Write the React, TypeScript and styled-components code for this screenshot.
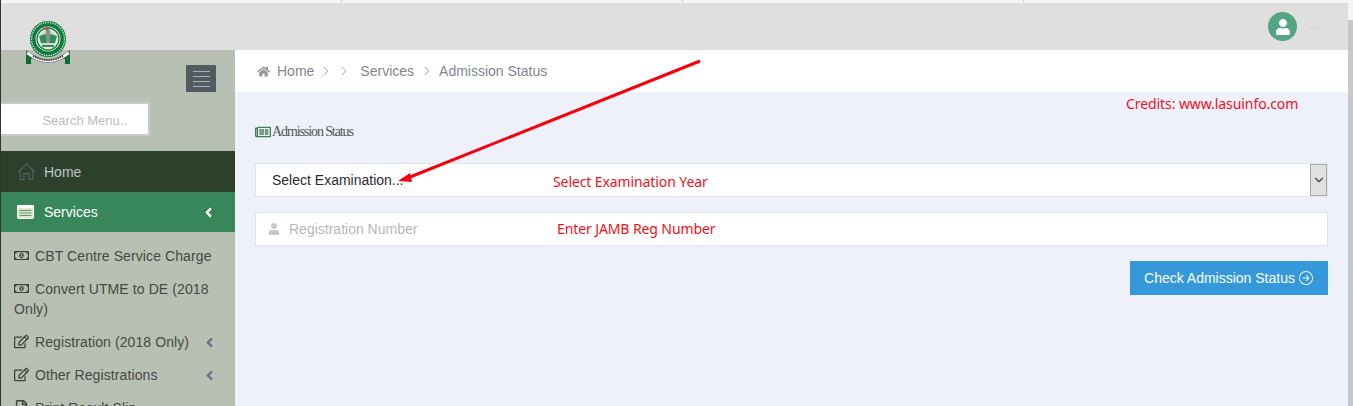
import styled, { createGlobalStyle } from "styled-components";
import {
  FaAngleLeft,
  FaHome,
  FaRegEdit,
  FaRegFileAlt,
  FaRegMoneyBillAlt,
  FaRegNewspaper,
  FaUser,
} from "react-icons/fa";
import { FiChevronDown } from "react-icons/fi";
import { SlArrowRight, SlHome } from "react-icons/sl";
import { BsArrowRightCircle } from "react-icons/bs";

const GlobalStyle = createGlobalStyle`
  html, body {
    margin: 0;
    padding: 0;
    overflow: hidden;
  }
  * {
    box-sizing: border-box;
  }
  body {
    font-family: "Liberation Sans", Arial, sans-serif;
    font-size: 14px;
  }
`;

const subItems = [
  { icon: <FaRegMoneyBillAlt />, label: "CBT Centre Service Charge" },
  { icon: <FaRegMoneyBillAlt />, label: "Convert UTME to DE (2018 Only)" },
  { icon: <FaRegEdit />, label: "Registration (2018 Only)", more: true },
  { icon: <FaRegEdit />, label: "Other Registrations", more: true },
  { icon: <FaRegFileAlt />, label: "Print Result Slip" },
];

const Logo = () => (
  <LogoBox viewBox="0 0 46 44" aria-hidden="true">
    <path d="M1 29 L5 33 L14 37 L6 38 L6 43 L1 43 Z" fill="#0d6b35" />
    <path d="M45 29 L41 33 L32 37 L40 38 L40 43 L45 43 Z" fill="#0d6b35" />
    <path d="M3 30 Q23 48 43 30 L45 33 Q23 50 1 33 Z" fill="#fff" stroke="#555" strokeWidth="0.6" />
    <path d="M8 35 Q23 43 38 35" fill="none" stroke="#333" strokeWidth="1.6" strokeDasharray="1.5 .8" />
    <circle cx="23" cy="18" r="18" fill="#0f7a3c" />
    <circle cx="23" cy="18" r="16.5" fill="none" stroke="#cfe3d4" strokeWidth="1.4" strokeDasharray="1.4 1" />
    <circle cx="23" cy="18" r="12.5" fill="#e9efe9" />
    <circle cx="23" cy="18" r="11" fill="none" stroke="#16803f" strokeWidth="1.3" />
    <circle cx="23" cy="18" r="8.5" fill="#ccd6cf" />
    <path d="M20 9 L22 5 L24 9 Z" fill="#e0392f" />
    <path d="M21 9 H25 L25 22 H21 Z" fill="#7d9a86" />
    <path d="M14 15 L21 13 L21 22 L16 22 Z M32 15 L25 13 L25 22 L30 22 Z" fill="#2f8d55" />
    <path d="M17 25 H29" stroke="#0f7a3c" strokeWidth="1.6" />
  </LogoBox>
);

const ServicesIcon = () => (
  <svg width="17" height="14" viewBox="0 0 17 14" aria-hidden="true">
    <rect x="0.5" y="0.5" width="16" height="13" rx="1" fill="#dfe8cf" stroke="#fff" />
    <rect x="0" y="0" width="17" height="3" rx="1" fill="#fff" />
    <path d="M2.5 5.5 H14.5 M2.5 8 H14.5 M2.5 10.5 H14.5" stroke="#5f9a6f" strokeWidth="1" />
  </svg>
);

const App = () => (
  <Page>
    <GlobalStyle />
    <TopStrip>
      <Tick />
      <Tick />
      <Tick />
    </TopStrip>
    <Header>
      <Avatar>
        <FaUser />
      </Avatar>
      <HeaderCaret>
        <FiChevronDown />
      </HeaderCaret>
    </Header>
    <Logo />
    <Body>
      <Sidebar>
        <ToggleRow>
          <Toggle aria-label="Toggle menu">
            <span />
            <span />
            <span />
            <span />
          </Toggle>
        </ToggleRow>
        <SearchBox placeholder="Search Menu.." />
        <HomeLink>
          <SlHome />
          Home
        </HomeLink>
        <ServicesLink>
          <ServicesIcon />
          <span>Services</span>
          <FaAngleLeft />
        </ServicesLink>
        <SubList>
          {subItems.map(({ icon, label, more }) => (
            <SubItem key={label}>
              <SubText>
                {icon}
                {label}
              </SubText>
              {more && (
                <SubCaret>
                  <FaAngleLeft />
                </SubCaret>
              )}
            </SubItem>
          ))}
        </SubList>
      </Sidebar>
      <Main>
        <Breadcrumb>
          <FaHome />
          <Crumb>Home</Crumb>
          <Sep $left={8} $right={10}>
            <SlArrowRight />
          </Sep>
          <Sep $left={0} $right={12}>
            <SlArrowRight />
          </Sep>
          <Crumb>Services</Crumb>
          <Sep $left={9} $right={8}>
            <SlArrowRight />
          </Sep>
          <Crumb>Admission Status</Crumb>
        </Breadcrumb>
        <Content>
          <Credits>Credits: www.lasuinfo.com</Credits>
          <Title>
            <FaRegNewspaper />
            Admission Status
          </Title>
          <Field>
            <SelectText>Select Examination...</SelectText>
            <Note $left={297} $top={8}>
              Select Examination Year
            </Note>
            <SelectArrow>
              <FiChevronDown />
            </SelectArrow>
          </Field>
          <Field>
            <FieldIcon>
              <FaUser />
            </FieldIcon>
            <RegInput placeholder="Registration Number" />
            <Note $left={301} $top={6}>
              Enter JAMB Reg Number
            </Note>
          </Field>
          <Actions>
            <CheckButton>
              Check Admission Status
              <BsArrowRightCircle />
            </CheckButton>
          </Actions>
        </Content>
      </Main>
    </Body>
    <ScrollTrack>
      <ScrollThumb />
    </ScrollTrack>
    <Arrow viewBox="0 0 330 130" aria-hidden="true">
      <path d="M315 2 L25 118" stroke="#f5000f" strokeWidth="3" fill="none" />
      <path d="M13 122 L25 114 L27 123 Z" fill="#f5000f" />
    </Arrow>
  </Page>
);

export default App;

const Page = styled.div`
  position: relative;
  width: 1353px;
  height: 406px;
  overflow: hidden;
  display: flex;
  flex-direction: column;
  background: #eef1f9;
  border-left: 1px solid #333;
`;

const TopStrip = styled.div`
  height: 3px;
  flex-shrink: 0;
  background: #f6f6f6;
  display: flex;
  justify-content: space-between;
  padding: 0 329px 0 340px;
`;

const Tick = styled.i`
  width: 1px;
  height: 3px;
  background: #d8d8d8;
`;

const Header = styled.header`
  height: 47px;
  flex-shrink: 0;
  background: #dfdfdf;
  display: flex;
  align-items: center;
  justify-content: flex-end;
  padding: 0 32px 0 0;
`;

const Avatar = styled.div`
  width: 29px;
  height: 29px;
  border-radius: 50%;
  background: #53a584;
  color: #fff;
  display: flex;
  align-items: center;
  justify-content: center;
  font-size: 16px;
`;

const HeaderCaret = styled.div`
  margin-left: 10px;
  margin-top: 2px;
  color: #cfd4e0;
  font-size: 14px;
  display: flex;
`;

const LogoBox = styled.svg`
  position: absolute;
  left: 24px;
  top: 21px;
  width: 46px;
  height: 44px;
`;

const Body = styled.div`
  flex: 1;
  display: flex;
  min-height: 0;
`;

const Sidebar = styled.aside`
  width: 234px;
  flex-shrink: 0;
  background: #b8c0b3;
  display: flex;
  flex-direction: column;
  overflow: hidden;

  > * {
    flex-shrink: 0;
  }
`;

const ToggleRow = styled.div`
  display: flex;
  justify-content: flex-end;
  padding: 15px 19px 0 0;
`;

const Toggle = styled.button`
  width: 30px;
  height: 27px;
  padding: 0;
  border: 0;
  background: #515c62;
  display: flex;
  flex-direction: column;
  align-items: center;
  justify-content: center;
  gap: 4px;

  span {
    display: block;
    width: 17px;
    height: 1px;
    background: #a9b0b3;
  }
`;

const SearchBox = styled.input`
  width: 149px;
  height: 34px;
  margin-top: 10px;
  border: 2px solid #c9cbc9;
  border-left: 0;
  background: #fff;
  padding: 2px 21px 0 0;
  text-align: right;
  font: 13px "Liberation Sans", Arial, sans-serif;
  outline: none;

  &::placeholder {
    color: #b9bcc4;
    opacity: 1;
  }
`;

const HomeLink = styled.div`
  height: 41px;
  margin-top: 15px;
  background: #2c402c;
  color: #bcc5cc;
  display: flex;
  align-items: center;
  padding-left: 17px;
  gap: 9px;

  svg {
    font-size: 17px;
    color: #58646c;
  }
`;

const ServicesLink = styled.div`
  height: 40px;
  background: #38875a;
  color: #fff;
  display: flex;
  align-items: center;
  padding: 0 19px 0 16px;
  gap: 10px;

  span {
    flex: 1;
  }

  svg:last-child {
    font-size: 15px;
  }
`;

const SubList = styled.ul`
  list-style: none;
  margin: 0;
  padding: 14px 0 0;
  display: flex;
  flex-direction: column;
  gap: 13px;
`;

const SubItem = styled.li`
  display: flex;
  align-items: center;
  justify-content: space-between;
  padding: 0 18px 0 13px;
  color: #424a42;
  line-height: 20px;
  letter-spacing: 0.1px;
`;

const SubText = styled.span`
  svg {
    font-size: 15px;
    margin-right: 6px;
    vertical-align: -2px;
    color: #3d4338;
  }
`;

const SubCaret = styled.span`
  display: flex;
  color: #66737e;
  font-size: 15px;
`;

const Main = styled.main`
  flex: 1;
  min-width: 0;
  display: flex;
  flex-direction: column;
`;

const Breadcrumb = styled.nav`
  height: 42px;
  flex-shrink: 0;
  background: #fff;
  color: #888;
  display: flex;
  align-items: center;
  padding-left: 22px;

  > svg {
    font-size: 13px;
    margin-right: 7px;
    color: #999;
  }
`;

const Crumb = styled.span`
  color: #7f8790;
`;

const Sep = styled.span<{ $left: number; $right: number }>`
  display: flex;
  margin: 0 ${(p) => p.$right}px 0 ${(p) => p.$left}px;
  font-size: 8px;
  color: #888;
`;

const Content = styled.section`
  position: relative;
  flex: 1;
  padding: 31px 25px 0 20px;
`;

const Credits = styled.div`
  position: absolute;
  top: 2px;
  left: 891px;
  color: #f0101c;
  font: 14px "Noto Sans", sans-serif;
  letter-spacing: -0.08px;
`;

const Title = styled.h1`
  margin: 0 0 23px;
  height: 17px;
  display: flex;
  align-items: center;
  font: 400 14px "Liberation Serif", serif;
  letter-spacing: -1.1px;
  color: #555;

  svg {
    font-size: 16px;
    color: #3f7f55;
    margin-right: 1px;
  }
`;

const Field = styled.div`
  position: relative;
  height: 34px;
  margin-bottom: 15px;
  background: #fff;
  border: 1px solid #e2e4e8;
  display: flex;
  align-items: center;
`;

const SelectText = styled.span`
  flex: 1;
  padding-left: 16px;
  color: #2b2b2b;
`;

const SelectArrow = styled.span`
  width: 17px;
  align-self: stretch;
  background: #e0e0e0;
  border: 1px solid #a9a9a9;
  color: #444;
  display: flex;
  align-items: center;
  justify-content: center;
  font-size: 14px;
`;

const FieldIcon = styled.span`
  display: flex;
  margin-left: 12px;
  color: #c8c8c8;
  font-size: 12px;
`;

const RegInput = styled.input`
  flex: 1;
  border: 0;
  outline: none;
  background: transparent;
  margin-left: 9px;
  padding: 0;
  font: 14px "Liberation Sans", Arial, sans-serif;

  &::placeholder {
    color: #b4b8bd;
    opacity: 1;
  }
`;

const Note = styled.span<{ $left: number; $top: number }>`
  position: absolute;
  left: ${(p) => p.$left}px;
  top: ${(p) => p.$top}px;
  color: #f0101c;
  font: 14px "Noto Sans", sans-serif;
  letter-spacing: -0.1px;
`;

const Actions = styled.div`
  display: flex;
  justify-content: flex-end;
`;

const CheckButton = styled.button`
  width: 198px;
  height: 34px;
  border: 0;
  background: #3498db;
  color: #fff;
  font: 14px "Liberation Sans", Arial, sans-serif;
  display: flex;
  align-items: center;
  justify-content: center;
  gap: 4px;
  padding: 0 1px 0 0;

  svg {
    font-size: 14px;
  }
`;

const ScrollTrack = styled.div`
  position: absolute;
  top: 3px;
  right: 0;
  bottom: 0;
  width: 5px;
  background: #f4f4f4;
  padding-top: 17px;
`;

const ScrollThumb = styled.div`
  height: 100%;
  background: #c8c8c8;
`;

const Arrow = styled.svg`
  position: absolute;
  left: 384px;
  top: 59px;
  width: 330px;
  height: 130px;
  pointer-events: none;
`;
